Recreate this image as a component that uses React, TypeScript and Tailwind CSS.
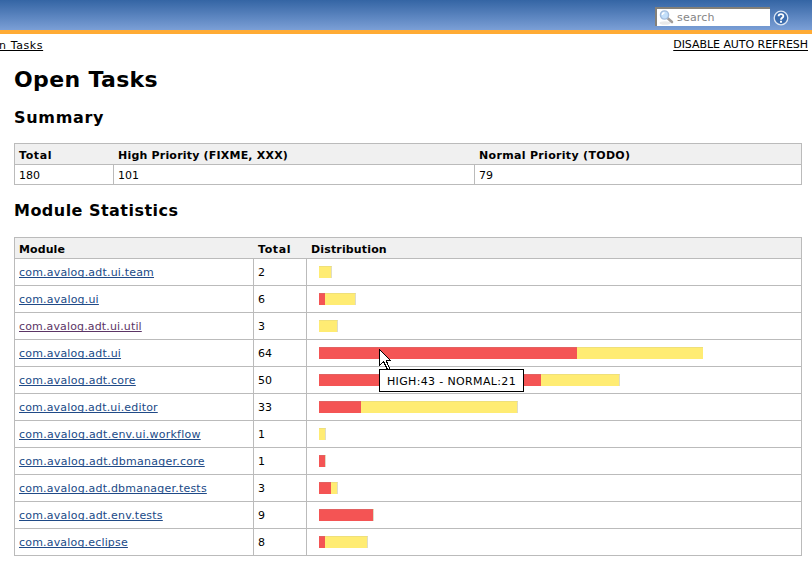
type ModuleRow = {
  name: string;
  total: number;
  high: number;
  normal: number;
  tracking: string;
  edge?: boolean;
  visited?: boolean;
};

const modules: ModuleRow[] = [
  { name: 'com.avalog.adt.ui.team', total: 2, high: 0, normal: 13, edge: true, tracking: 'tracking-[0.19px]' },
  { name: 'com.avalog.ui', total: 6, high: 6, normal: 31, edge: true, tracking: 'tracking-[0.2px]' },
  { name: 'com.avalog.adt.ui.util', total: 3, high: 0, normal: 19, edge: true, visited: true, tracking: 'tracking-[0.14px]' },
  { name: 'com.avalog.adt.ui', total: 64, high: 258, normal: 126, tracking: 'tracking-[0.19px]' },
  { name: 'com.avalog.adt.core', total: 50, high: 222, normal: 79, edge: true, tracking: 'tracking-[0.22px]' },
  { name: 'com.avalog.adt.ui.editor', total: 33, high: 42, normal: 157, edge: true, tracking: 'tracking-[0.17px]' },
  { name: 'com.avalog.adt.env.ui.workflow', total: 1, high: 0, normal: 7, edge: true, tracking: 'tracking-[0.24px]' },
  { name: 'com.avalog.adt.dbmanager.core', total: 1, high: 6, normal: 1, edge: true, tracking: 'tracking-[0.25px]' },
  { name: 'com.avalog.adt.dbmanager.tests', total: 3, high: 12, normal: 7, edge: true, tracking: 'tracking-[0.21px]' },
  { name: 'com.avalog.adt.env.tests', total: 9, high: 54, normal: 1, edge: true, tracking: 'tracking-[0.22px]' },
  { name: 'com.avalog.eclipse', total: 8, high: 6, normal: 43, edge: true, tracking: 'tracking-[0.18px]' },
];

function Bar({ high, normal, edge }: { high: number; normal: number; edge?: boolean }) {
  return (
    <div className="flex h-3">
      <div className="h-3 border-t border-[#e26262] bg-[#f45454]" style={{ width: high }} />
      <div
        className={`h-3 border-t border-[#efe07a] bg-[#ffec73] ${edge ? 'border-r border-r-[#dedcc8]' : ''}`}
        style={{ width: normal }}
      />
    </div>
  );
}

function Cursor() {
  return (
    <svg className="absolute left-[379px] top-[349px]" width="12" height="21" viewBox="0 0 12 21" shapeRendering="crispEdges">
      <path d="M0.5 0.5V16.5L4.5 12.5L8.5 20.5H10.5V19L7.5 12.5V11.5H11.5Z" fill="#fff" stroke="#000" />
    </svg>
  );
}

function SearchIcon() {
  return (
    <svg className="shrink-0" width="16" height="16" viewBox="0 0 16 16">
      <ellipse cx="6" cy="13" rx="5.5" ry="1.8" fill="#e9e9e9" />
      <path d="M9 8.5L13 12" stroke="#a39d98" strokeWidth="2.6" strokeLinecap="round" />
      <circle cx="5.5" cy="5" r="4.1" fill="#c3dffa" stroke="#a3bcdc" strokeWidth="1.4" />
      <path d="M3.3 5A2.3 2.3 0 0 1 5.5 2.8" fill="none" stroke="#fff" strokeWidth="1.4" />
    </svg>
  );
}

function HelpIcon() {
  return (
    <svg className="ml-[3px] mt-[3px]" width="16" height="16" viewBox="0 0 16 16">
      <circle cx="8" cy="8" r="6.8" fill="#3b6cae" stroke="#dbe5f3" strokeWidth="1.3" />
      <path d="M5.6 6.3C5.6 3.3 10.5 3.4 10.3 6.2C10.2 7.8 8 7.8 8 9.8" fill="none" stroke="#fff" strokeWidth="1.9" />
      <rect x="7" y="10.8" width="2" height="1.9" fill="#fff" />
    </svg>
  );
}

export default function App() {
  return (
    <div className="relative h-[571px] w-[812px] overflow-hidden bg-white font-['DejaVu_Sans',Verdana,sans-serif] text-[11px] leading-[14px] text-black">
      <header className="flex h-[34px] justify-end border-b-4 border-[#ffab35] bg-linear-to-b from-[#3465a4] to-[#7b9fd6] pr-[23px] pt-[7px]">
        <div className="flex h-[19px] w-[115px] items-center border-l-2 border-t-2 border-[#848078] bg-white pl-[2px] text-[#858585]">
          <SearchIcon />
          <span className="ml-[2px] tracking-[0.2px]">search</span>
        </div>
        <HelpIcon />
      </header>

      <nav className="flex h-[24px] justify-between pr-[4px] pt-[5px]">
        <span className="-ml-px tracking-[0.6px] underline decoration-1 underline-offset-1">n Tasks</span>
        <span className="-mt-px tracking-[-0.05px] underline decoration-1 underline-offset-2">DISABLE AUTO REFRESH</span>
      </nav>

      <main className="pl-[14px] pr-[10px]">
        <h1 className="pt-[8px] text-[22px] font-bold leading-[28px] tracking-[0.35px]">Open Tasks</h1>
        <h2 className="pt-[14px] text-[16px] font-bold leading-[20px] tracking-[0.68px]">Summary</h2>

        <section className="mt-[15px] border border-[#bbb]">
          <div className="grid h-[21px] grid-cols-[99px_361px_1fr] border-b border-[#bbb] bg-[#f0f0f0] pt-px font-bold leading-[21px]">
            <span className="pl-[4px] tracking-[0.6px]">Total</span>
            <span className="pl-[4px] tracking-[0.2px]">High Priority (FIXME, XXX)</span>
            <span className="pl-[4px] tracking-[0.32px]">Normal Priority (TODO)</span>
          </div>
          <div className="grid h-[19px] grid-cols-[99px_361px_1fr] leading-[21px]">
            <span className="h-[19px] border-r border-[#bbb] pl-[4px]">180</span>
            <span className="h-[19px] border-r border-[#bbb] pl-[4px]">101</span>
            <span className="h-[19px] pl-[4px]">79</span>
          </div>
        </section>

        <h2 className="pt-[16px] text-[16px] font-bold leading-[20px] tracking-[0.47px]">Module Statistics</h2>

        <section className="mt-[16px] border border-[#bbb]">
          <div className="grid h-[21px] grid-cols-[239px_53px_1fr] border-b border-[#bbb] bg-[#f0f0f0] pt-px font-bold leading-[21px]">
            <span className="pl-[4px] tracking-[0.1px]">Module</span>
            <span className="pl-[4px] tracking-[0.6px]">Total</span>
            <span className="pl-[4px] tracking-[0.15px]">Distribution</span>
          </div>
          {modules.map((m) => (
            <div key={m.name} className="grid h-[27px] grid-cols-[239px_53px_1fr] border-b border-[#bbb] leading-[26px] last:h-[26px] last:border-b-0">
              <div className="h-[26px] border-r border-[#bbb] pl-[4px] pt-px">
                <a
                  className={`underline decoration-1 underline-offset-1 [text-decoration-skip-ink:none] ${m.tracking} ${m.visited ? 'text-[#5c3566]' : 'text-[#204a87]'}`}
                >
                  {m.name}
                </a>
              </div>
              <div className="h-[26px] border-r border-[#bbb] pl-[4px] pt-px">{m.total}</div>
              <div className="pl-[12px] pt-[7px]">
                <Bar high={m.high} normal={m.normal} edge={m.edge} />
              </div>
            </div>
          ))}
        </section>
      </main>

      <Cursor />
      <div className="absolute left-[379px] top-[369px] h-[23px] w-[145px] whitespace-nowrap border border-black bg-white pl-[7px] pt-px leading-[21px] tracking-[0.35px]">
        HIGH:43 - NORMAL:21
      </div>
    </div>
  );
}
